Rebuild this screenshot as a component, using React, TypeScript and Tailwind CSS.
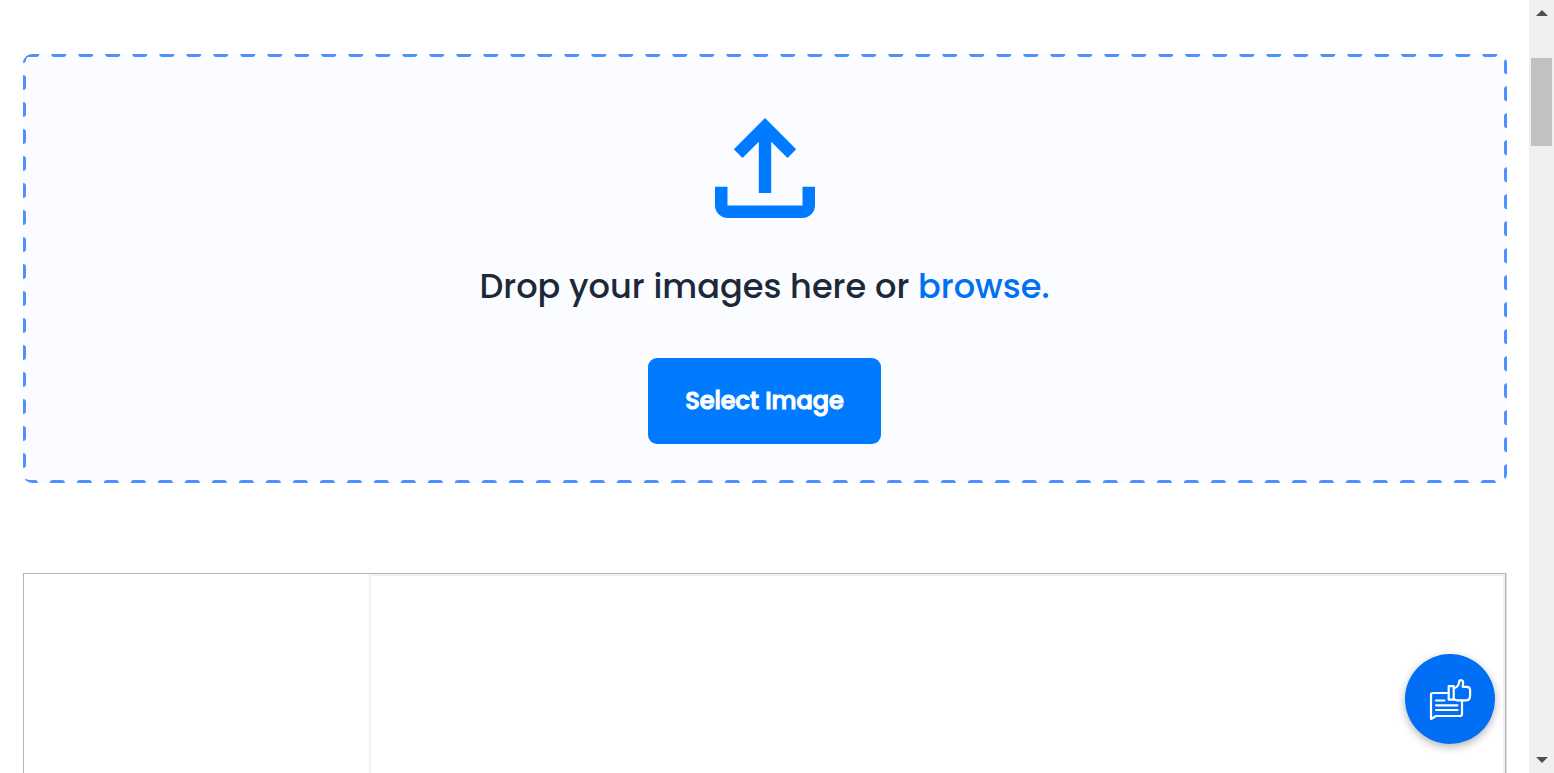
function UploadIcon() {
  return (
    <svg className="h-[100px] w-[100px] shrink-0" viewBox="0 0 100 100" fill="#007bff">
      <path d="M50 0 81.2 31.2 72.5 40 56.2 23.7V75H43.8V23.7L27.5 40 18.8 31.2Z" />
      <path d="M0 68.7H12.5V87.5H87.5V68.7H100V87.5A12.5 12.5 0 0 1 87.5 100H12.5A12.5 12.5 0 0 1 0 87.5Z" />
    </svg>
  );
}

function FeedbackIcon() {
  return (
    <svg
      className="h-[42px] w-[42px] overflow-visible"
      viewBox="-0.5 -1 42 42"
      fill="none"
      stroke="#fff"
      strokeWidth="2.2"
      strokeLinejoin="round"
      strokeLinecap="round"
    >
      <path d="M18.5 14H3.5a2 2 0 0 0-2 2V40L6.5 37H30.5a2 2 0 0 0 2-2V22" />
      <path d="M6.5 21.5H15M6.5 26.3H28M6.5 31H28" />
      <path d="M19.2 7.2H24.2V20.7H19.2Z" />
      <path d="M24.2 9.5C27.5 8.5 29.3 6 29.6 3C29.8 .6 33.4 .6 33.6 3.2C33.7 4.8 33.4 6.2 33.1 7.8H37C39.5 7.8 40.6 9 40.6 11V16.5C40.6 19.2 39.2 21.4 36.3 21.4H28C26.5 21.4 25.5 20.5 24.2 20.2" />
    </svg>
  );
}

function DropZone() {
  return (
    <section className="relative flex h-[429px] flex-col items-center overflow-hidden rounded-[9px] bg-[#fbfcff] pt-16">
      <svg className="pointer-events-none absolute inset-0 h-[429px] w-[1484px]" aria-hidden="true">
        <rect
          width="1484"
          height="429"
          rx="6.2"
          fill="none"
          stroke="#508fff"
          strokeWidth="6"
          strokeDasharray="9 18"
          strokeDashoffset="1.9"
          strokeLinecap="round"
        />
      </svg>
      <UploadIcon />
      <p className="mr-px mt-[42px] flex h-[54px] items-center whitespace-pre text-[33.6px] font-medium text-[#1d2939]">
        Drop your images here or <span className="text-[#0070f4]">browse.</span>
      </p>
      <button className="mr-[2px] mt-[44px] flex h-[86px] w-[233px] items-center justify-center rounded-[9px] bg-[#007bff] pl-px text-[24px] font-medium text-white [-webkit-text-stroke:1.1px_currentColor]">
        Select Image
      </button>
    </section>
  );
}

function Scrollbar() {
  return (
    <aside className="flex h-full w-[25px] shrink-0 flex-col items-center justify-between bg-[#f0f0f0]">
      <div className="flex flex-col items-center">
        <svg className="mt-[10px] h-[6px] w-[12px]" viewBox="0 0 12 6" fill="#505050">
          <path d="M6 0 12 6H0Z" />
        </svg>
        <div className="mt-[42px] h-[88px] w-[21px] bg-[#c1c1c1]" />
      </div>
      <svg className="mb-[10px] h-[6px] w-[12px]" viewBox="0 0 12 6" fill="#505050">
        <path d="M0 0H12L6 6Z" />
      </svg>
    </aside>
  );
}

export default function App() {
  return (
    <div className="relative flex h-[773px] w-[1554px] overflow-hidden bg-white font-['Poppins','Inter',sans-serif]">
      <main className="flex w-[1529px] flex-col px-[23px] pr-[22px] pt-[54px]">
        <DropZone />
        <section className="mt-[90px] flex h-[200px] border-r border-[#dddde0]">
          <div className="flex flex-1 border-x border-t border-[#b5b5b8]">
            <div className="w-[345px]" />
            <div className="flex-1 border-x-2 border-t-2 border-[#f0f0f7]" />
          </div>
        </section>
      </main>
      <Scrollbar />
      <button
        aria-label="Feedback"
        className="absolute left-[1405px] top-[654px] flex h-[90px] w-[90px] items-center justify-center rounded-full bg-[#006ff5] shadow-[0_3px_9px_rgba(0,0,0,0.3)]"
      >
        <FeedbackIcon />
      </button>
    </div>
  );
}
